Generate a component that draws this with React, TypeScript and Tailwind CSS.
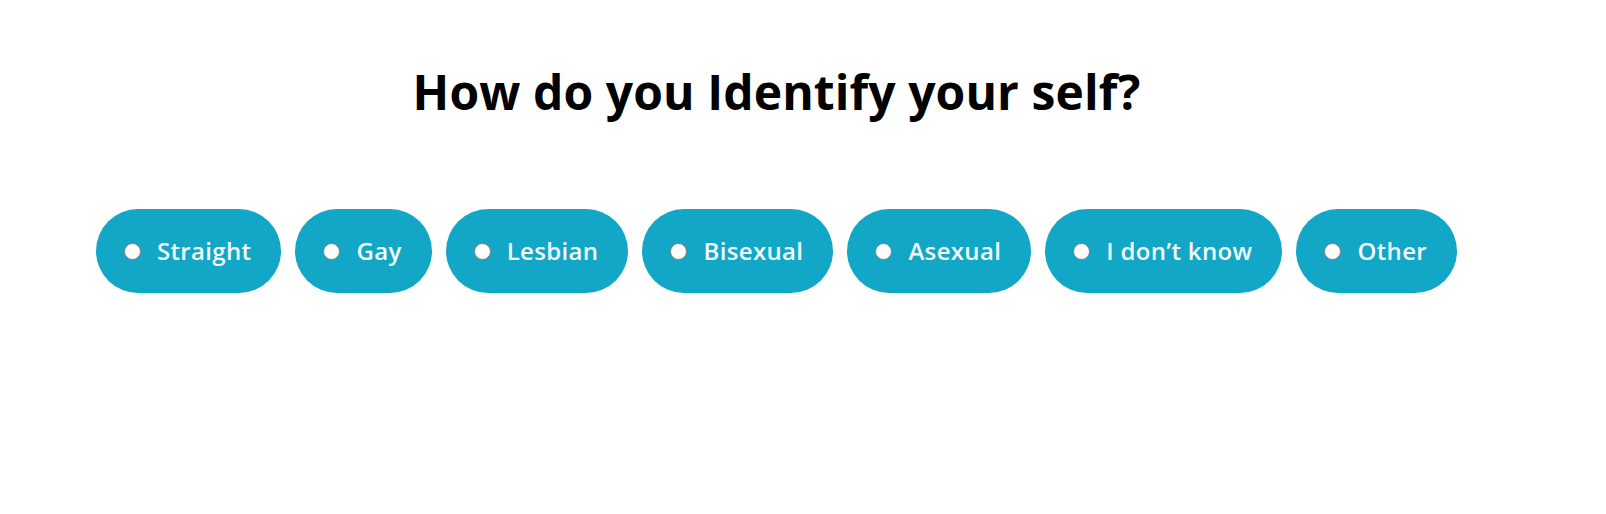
import React from "react";

const options = ["Straight", "Gay", "Lesbian", "Bisexual", "Asexual", "I don\u2019t know", "Other"];

export default function App() {
  return (
    <div
      className="w-full min-h-[514px] bg-white pr-[53px] pt-[63px] flex flex-col items-center"
      style={{ fontFamily: "'Open Sans', 'Noto Sans', sans-serif" }}
    >
      <h1 className="text-[48px] leading-[58px] font-bold text-black tracking-[0.1px]">How do you Identify your self?</h1>
      <div className="mt-[88px] flex gap-[14px]">
        {options.map((o) => (
          <label
            key={o}
            className="h-[84px] flex items-center gap-[16px] pl-[28px] pr-[30px] rounded-full bg-[#12a6c7] cursor-pointer"
          >
            <span className="w-[17px] h-[17px] rounded-full bg-white border border-[#7d7d7d] shrink-0" />
            <span className="text-[24px] font-semibold text-[#f2fbfd] leading-none tracking-[0.35px]">{o}</span>
          </label>
        ))}
      </div>
    </div>
  );
}
